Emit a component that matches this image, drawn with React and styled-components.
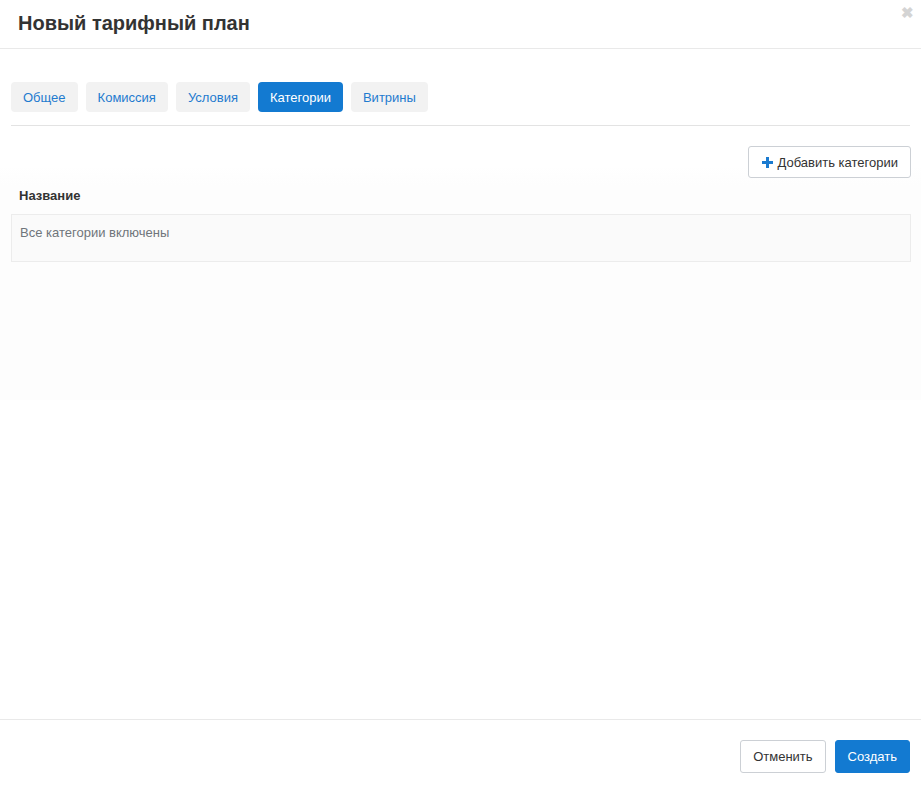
import React, { useState } from 'react';
import styled, { createGlobalStyle } from 'styled-components';

// Modal "Новый тарифный план" with tabs, categories table and footer actions.

const GlobalStyle = createGlobalStyle`
    html, body {
        margin: 0;
        padding: 0;
        background: #fff;
    }
    body {
        font-family: "Liberation Sans", Arial, sans-serif;
        font-size: 13px;
        color: #333;
    }
`

const Modal = styled.div`
    width: 921px;
    height: 790px;
    display: flex;
    flex-direction: column;
    box-sizing: border-box;
`

const Header = styled.div`
    position: relative;
    height: 49px;
    box-sizing: border-box;
    padding: 11px 18px 0;
    border-bottom: 1px solid #e9e9e9;
`

const Title = styled.h4`
    margin: 0;
    font-size: 20px;
    font-weight: 700;
    color: #333;
    line-height: 24px;
`

const Close = styled.span`
    position: absolute;
    top: 4px;
    right: 7px;
    font-size: 15px;
    font-weight: 700;
    color: #d4d4d4;
    cursor: pointer;
`

const Body = styled.div`
    flex: 1;
    padding: 33px 0 0;
    display: flex;
    flex-direction: column;
`

const Tabs = styled.div`
    display: flex;
    gap: 8px;
    margin: 0 11px 0 11px;
    padding-bottom: 13px;
    border-bottom: 1px solid #e3e3e3;
`

const Tab = styled.button`
    height: 30px;
    padding: 0 12px;
    border: none;
    border-radius: 4px;
    font-family: inherit;
    font-size: 13px;
    cursor: pointer;
    background: ${props => props.active ? '#137ad1' : '#f2f2f2'};
    color: ${props => props.active ? '#fff' : '#1f7bcf'};
`

const Content = styled.div`
    min-height: 274px;
    padding: 0 10px 0 11px;
    background: linear-gradient(#fff 0, #fff 40px, #fdfdfd 60px, #fdfdfd 100%);
`

const Toolbar = styled.div`
    display: flex;
    justify-content: flex-end;
    padding-top: 20px;
`

const AddButton = styled.button`
    display: flex;
    align-items: center;
    gap: 5px;
    height: 32px;
    padding: 0 12px 0 13px;
    background: #fff;
    border: 1px solid #ccd0d5;
    border-radius: 3px;
    font-family: inherit;
    font-size: 13px;
    color: #333;
    cursor: pointer;
`

const Table = styled.div`
    margin-top: 8px;
`

const HeadCell = styled.div`
    padding: 2px 8px 11px;
    font-weight: 700;
    color: #333;
`

const Row = styled.div`
    height: 48px;
    box-sizing: border-box;
    padding: 10px 8px 0;
    background: #fafafa;
    border: 1px solid #ececec;
    color: #6f757b;
`

const Footer = styled.div`
    height: 71px;
    box-sizing: border-box;
    border-top: 1px solid #e9e9e9;
    display: flex;
    justify-content: flex-end;
    align-items: flex-start;
    gap: 9px;
    padding: 20px 11px 0;
`

const FooterButton = styled.button`
    height: 33px;
    padding: 0 12px;
    border-radius: 3px;
    font-family: inherit;
    font-size: 13px;
    cursor: pointer;
    border: 1px solid ${props => props.primary ? '#137ad1' : '#ccd0d5'};
    background: ${props => props.primary ? '#137ad1' : '#fff'};
    color: ${props => props.primary ? '#fff' : '#333'};
`

const PlusIcon = () => (
    <svg width="11" height="11" viewBox="0 0 11 11">
        <path d="M4 0h3v4h4v3H7v4H4V7H0V4h4z" fill="#1b7bd0" />
    </svg>
)

const tabs = ['Общее', 'Комиссия', 'Условия', 'Категории', 'Витрины'];

const App = () => {
    const [active, setActive] = useState('Категории');

    return (
        <>
        <GlobalStyle />
        <Modal>
            <Header>
                <Title>Новый тарифный план</Title>
                <Close>✖</Close>
            </Header>

            <Body>
                <Tabs>
                    {tabs.map(t => (
                        <Tab key={t} active={t === active} onClick={() => setActive(t)}>{t}</Tab>
                    ))}
                </Tabs>

                <Content>
                    <Toolbar>
                        <AddButton><PlusIcon />Добавить категории</AddButton>
                    </Toolbar>
                    <Table>
                        <HeadCell>Название</HeadCell>
                        <Row>Все категории включены</Row>
                    </Table>
                </Content>
            </Body>

            <Footer>
                <FooterButton>Отменить</FooterButton>
                <FooterButton primary>Создать</FooterButton>
            </Footer>
        </Modal>
        </>
    )
}

export default App;
